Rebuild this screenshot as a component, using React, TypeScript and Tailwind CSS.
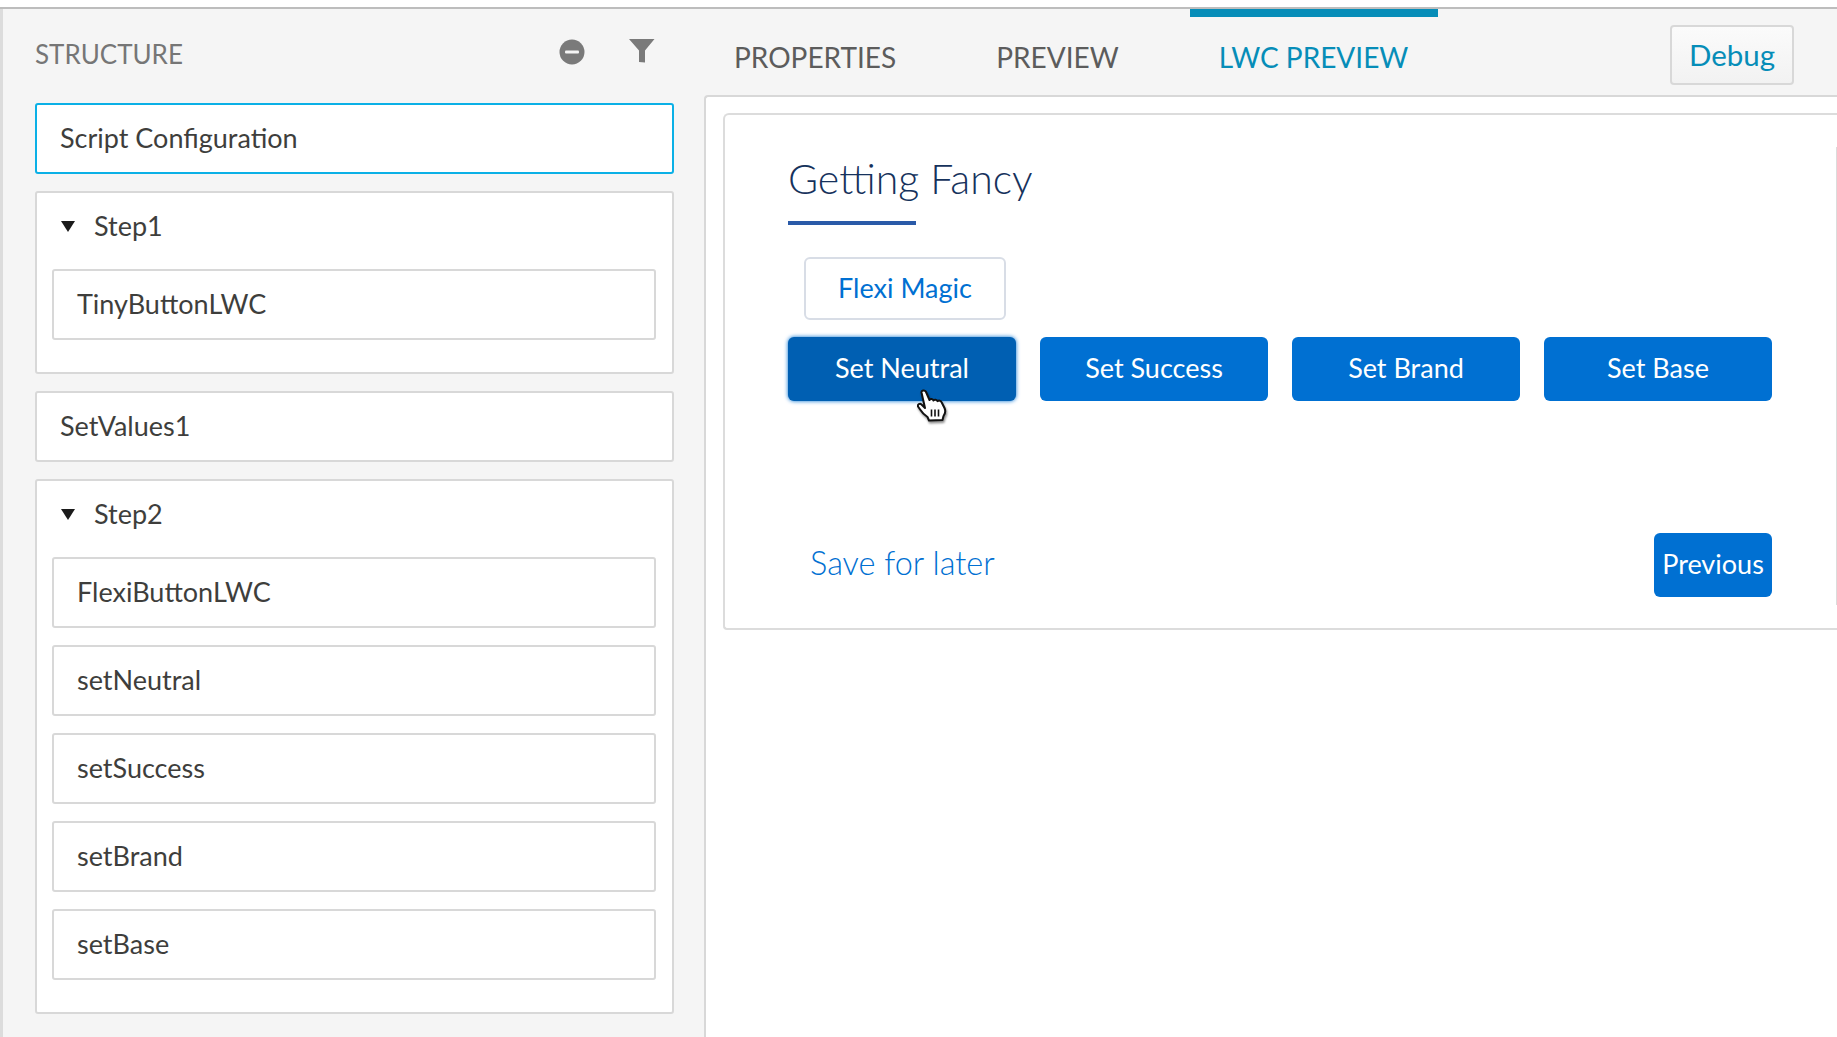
import React from 'react';

const Row = ({ label, active }: { label: string; active?: boolean }) => (
  <div
    className={`flex h-[71px] items-center rounded-[3px] border-2 bg-white pl-[23px] text-[27px] text-[#3e3e3c] ${
      active ? 'border-[#0bb0e6]' : 'border-[#d8d8d8]'
    }`}
  >
    {label}
  </div>
);

const Group = ({ label, items }: { label: string; items: string[] }) => (
  <div className="rounded-[3px] border-2 border-[#d8d8d8] bg-white pr-[16px] pb-[32px] pl-[15px]">
    <div className="mb-[10px] flex h-[66px] items-center pl-[9px] text-[27px] text-[#3e3e3c]">
      <svg width="14" height="11" viewBox="0 0 14 11" className="mr-[19px]">
        <path d="M0 0h14L7 11z" fill="#1b1b1b" />
      </svg>
      {label}
    </div>
    <div className="flex flex-col gap-[17px]">
      {items.map(item => (
        <Row key={item} label={item} />
      ))}
    </div>
  </div>
);

const Tab = ({ label, active }: { label: string; active?: boolean }) => (
  <div className={`text-[28px] ${active ? 'text-[#068db8]' : 'text-[#5c5c5c]'}`}>{label}</div>
);

const HandCursor = () => (
  <svg
    width="30"
    height="33"
    viewBox="0 0 30 33"
    className="absolute top-[52px] left-[129px] drop-shadow-[1px_2px_1px_rgba(0,0,0,0.45)]"
  >
    <path
      d="M4.500 3.500C4.200 1.500 7.500.5 8.800 2.500L12.500 11C13.500 9.500 15.800 9.800 16.500 11.500C17.500 10.200 19.800 10.500 20.500 12.200C21.800 11.200 23.800 11.500 24.600 13.200L27.500 19C28.800 22 28 25 26.500 27L25.500 31L12 31.500L10.500 28C7.500 26 5 23.500 3.500 21L1 17.500C.3 15.500 2.800 14 4.500 15.500L8 19z"
      fill="#fff"
      stroke="#111"
      strokeWidth="2"
      strokeLinejoin="round"
    />
    <path d="M14.500 20.500v7M18 20.500v7M21.500 20.500v7" stroke="#111" strokeWidth="1.600" />
  </svg>
);

export default function App() {
  return (
    <div
      className="h-[1037px] w-[1837px] overflow-hidden bg-white"
      style={{ fontFamily: 'Lato, "Open Sans", sans-serif' }}
    >
      <div className="h-[7px] bg-white" />
      <div className="flex h-[1030px] border-t-2 border-[#bdbdbd] bg-[#f5f5f5]">
        {/* left tree */}
        <aside className="h-full w-[704px] shrink-0 border-l-[3px] border-l-[#dcdcdc] pr-[30px] pl-[32px]">
          <div className="flex h-[94px] items-center pb-[4px]">
            <span className="text-[26px] text-[#767676]">STRUCTURE</span>
            <svg width="26" height="26" viewBox="0 0 26 26" className="mb-[4px] ml-auto">
              <circle cx="13" cy="13" r="12.500" fill="#7a7a7a" />
              <rect x="6" y="11.500" width="14" height="3" rx="1" fill="#f5f5f5" />
            </svg>
            <svg width="26" height="24" viewBox="0 0 26 24" className="mr-[19px] mb-[6px] ml-[44px]">
              <path d="M0 0h25.500L16 11.500V23.500l-6-.500V11.500z" fill="#7a7a7a" />
            </svg>
          </div>
          <div className="flex flex-col gap-[17px]">
            <Row label="Script Configuration" active />
            <Group label="Step1" items={['TinyButtonLWC']} />
            <Row label="SetValues1" />
            <Group label="Step2" items={['FlexiButtonLWC', 'setNeutral', 'setSuccess', 'setBrand', 'setBase']} />
          </div>
        </aside>

        {/* right panel */}
        <main className="flex min-w-0 flex-1 flex-col">
          <header className="relative flex h-[86px] items-center pr-[43px] pl-[30px]">
            <div className="flex items-center gap-[100px] pt-[10px]">
              <Tab label="PROPERTIES" />
              <Tab label="PREVIEW" />
              <Tab label="LWC PREVIEW" active />
            </div>
            <div className="absolute top-0 left-[486px] h-[8px] w-[248px] bg-[#068db8]" />
            <button className="mt-[6px] ml-auto h-[60px] w-[124px] rounded-[4px] border-2 border-[#d8d8d8] bg-gradient-to-b from-[#fbfbfb] to-[#f2f2f2] text-[29.500px] text-[#068db8]">
              Debug
            </button>
          </header>
          <div className="flex-1 rounded-tl-[4px] border-t-2 border-l-2 border-[#d8d8d8] bg-white pt-[16px] pl-[17px]">
            <section className="relative h-[517px] rounded-tl-[6px] rounded-bl-[4px] border-2 border-r-0 border-[#dcdcdc] pt-[24px] pl-[63px]">
              <div className="absolute top-[32px] right-0 h-[458px] w-px bg-[#dcdcdc]" />
              <h1 className="text-[41px] leading-[80px] font-light text-[#16325c]">Getting Fancy</h1>
              <div className="mt-[2px] h-[4px] w-[128px] bg-[#2a5aa8]" />
              <button className="mt-[32px] ml-[16px] block h-[63px] w-[202px] rounded-[6px] border-2 border-[#d8dde6] bg-white text-[27px] text-[#0070d2]">
                Flexi Magic
              </button>
              <div className="mt-[17px] flex gap-[24px]">
                <button className="relative h-[64px] w-[228px] rounded-[6px] bg-[#005fb2] pb-[2px] text-[27px] text-white shadow-[0_0_4px_#0070d2]">
                  Set Neutral
                  <HandCursor />
                </button>
                <button className="h-[64px] w-[228px] rounded-[6px] bg-[#0070d2] pb-[2px] text-[27px] text-white">Set Success</button>
                <button className="h-[64px] w-[228px] rounded-[6px] bg-[#0070d2] pb-[2px] text-[27px] text-white">Set Brand</button>
                <button className="h-[64px] w-[228px] rounded-[6px] bg-[#0070d2] pb-[2px] text-[27px] text-white">Set Base</button>
              </div>
              <div className="mt-[132px] flex w-[984px] items-center justify-between pl-[22px]">
                <span className="mb-[4px] text-[32.500px] font-light text-[#0070d2]">Save for later</span>
                <button className="h-[64px] w-[118px] rounded-[6px] bg-[#0070d2] pb-[2px] text-[27px] text-white">Previous</button>
              </div>
            </section>
          </div>
        </main>
      </div>
    </div>
  );
}
